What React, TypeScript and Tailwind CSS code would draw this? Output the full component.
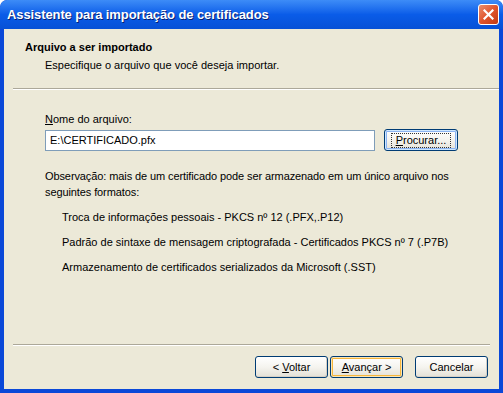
import React from "react";

const font = { fontFamily: '"Liberation Sans", Arial, sans-serif' };

function XpButton({
  children,
  variant = "normal",
  className = "",
}: {
  children: React.ReactNode;
  variant?: "normal" | "default" | "focus";
  className?: string;
}) {
  const inner =
    variant === "default"
      ? "shadow-[inset_0_0_0_1px_#fce5b3,inset_0_0_0_2px_#f5b63c]"
      : variant === "focus"
        ? "shadow-[inset_0_0_0_1px_#cee7ff,inset_0_0_0_2px_#8cb4f2]"
        : "shadow-[inset_-1px_-1px_0_0_#d6d0c5]";
  return (
    <div
      className={`h-[22px] rounded-[3px] border border-[#003c74] bg-gradient-to-b from-[#ffffff] via-[#f5f4ef] to-[#e3e0d6] flex items-center justify-center text-[11px] text-black ${inner} ${className}`}
    >
      {variant === "focus" ? (
        <span className="border border-dotted border-[#333] px-[4px] leading-[13px]">
          {children}
        </span>
      ) : (
        <span className="leading-[13px]">{children}</span>
      )}
    </div>
  );
}

export default function App() {
  return (
    <div
      className="w-[503px] h-[393px] bg-[#0a48d8] rounded-t-[7px] flex flex-col overflow-hidden"
      style={font}
    >
      {/* barra de título */}
      <div className="h-[29px] shrink-0 flex items-center justify-between pl-[7px] pr-[4px] bg-gradient-to-b from-[#3d8cf7] via-[#0a5ce8] to-[#0751d6] rounded-t-[7px]">
        <span className="text-white font-bold text-[13px] tracking-[-0.1px] [text-shadow:1px_1px_0_#0a1f70]">
          Assistente para importação de certificados
        </span>
        <div className="w-[21px] h-[21px] rounded-[3px] border border-white bg-gradient-to-br from-[#e88d6c] via-[#e0542c] to-[#c33a12] flex items-center justify-center">
          <svg width="11" height="11" viewBox="0 0 11 11">
            <path
              d="M1.5 1.5 L9.5 9.5 M9.5 1.5 L1.5 9.5"
              stroke="white"
              strokeWidth="2.2"
              strokeLinecap="square"
            />
          </svg>
        </div>
      </div>

      {/* área cliente */}
      <div className="flex-1 mx-[4px] mb-[4px] bg-[#ece9d8] flex flex-col text-[11px] text-black">
        {/* cabeçalho */}
        <div className="h-[59px] shrink-0 pt-[12px] pl-[21px]">
          <div className="font-bold leading-[13px]">Arquivo a ser importado</div>
          <div className="pl-[20px] mt-[5px] leading-[13px]">
            Especifique o arquivo que você deseja importar.
          </div>
        </div>
        <div className="ml-[9px] h-[2px] border-t border-[#aca899] border-b border-b-white" />

        {/* corpo */}
        <div className="flex-1 pl-[41px] pr-[32px] pt-[23px]">
          <div className="leading-[13px]">
            <span className="underline">N</span>ome do arquivo:
          </div>
          <div className="flex items-center mt-[3px]">
            <div className="w-[330px] h-[21px] bg-white border border-[#7f9db9] flex items-center pl-[4px]">
              E:\CERTIFICADO.pfx
            </div>
            <XpButton variant="focus" className="ml-[9px] w-[74px]">
              <span className="underline">P</span>rocurar...
            </XpButton>
          </div>
          <div className="mt-[17px] leading-[16px] tracking-[-0.1px]">
            Observação: mais de um certificado pode ser armazenado em um único arquivo nos
            <br />
            seguintes formatos:
          </div>
          <div className="pl-[17px] mt-[11px] flex flex-col gap-[12px] leading-[13px]">
            <div>Troca de informações pessoais - PKCS nº 12 (.PFX,.P12)</div>
            <div>Padrão de sintaxe de mensagem criptografada - Certificados PKCS nº 7 (.P7B)</div>
            <div>Armazenamento de certificados serializados da Microsoft (.SST)</div>
          </div>
        </div>

        {/* rodapé */}
        <div className="mx-[9px] h-[2px] border-t border-[#aca899] border-b border-b-white" />
        <div className="h-[43px] shrink-0 flex items-center justify-end pr-[11px] pb-[1px]">
          <XpButton className="w-[73px]">
            &lt; <span className="underline">V</span>oltar
          </XpButton>
          <XpButton variant="default" className="w-[73px] ml-[2px]">
            <span className="underline">A</span>vançar &gt;
          </XpButton>
          <XpButton className="w-[73px] ml-[12px]">Cancelar</XpButton>
        </div>
      </div>
    </div>
  );
}
